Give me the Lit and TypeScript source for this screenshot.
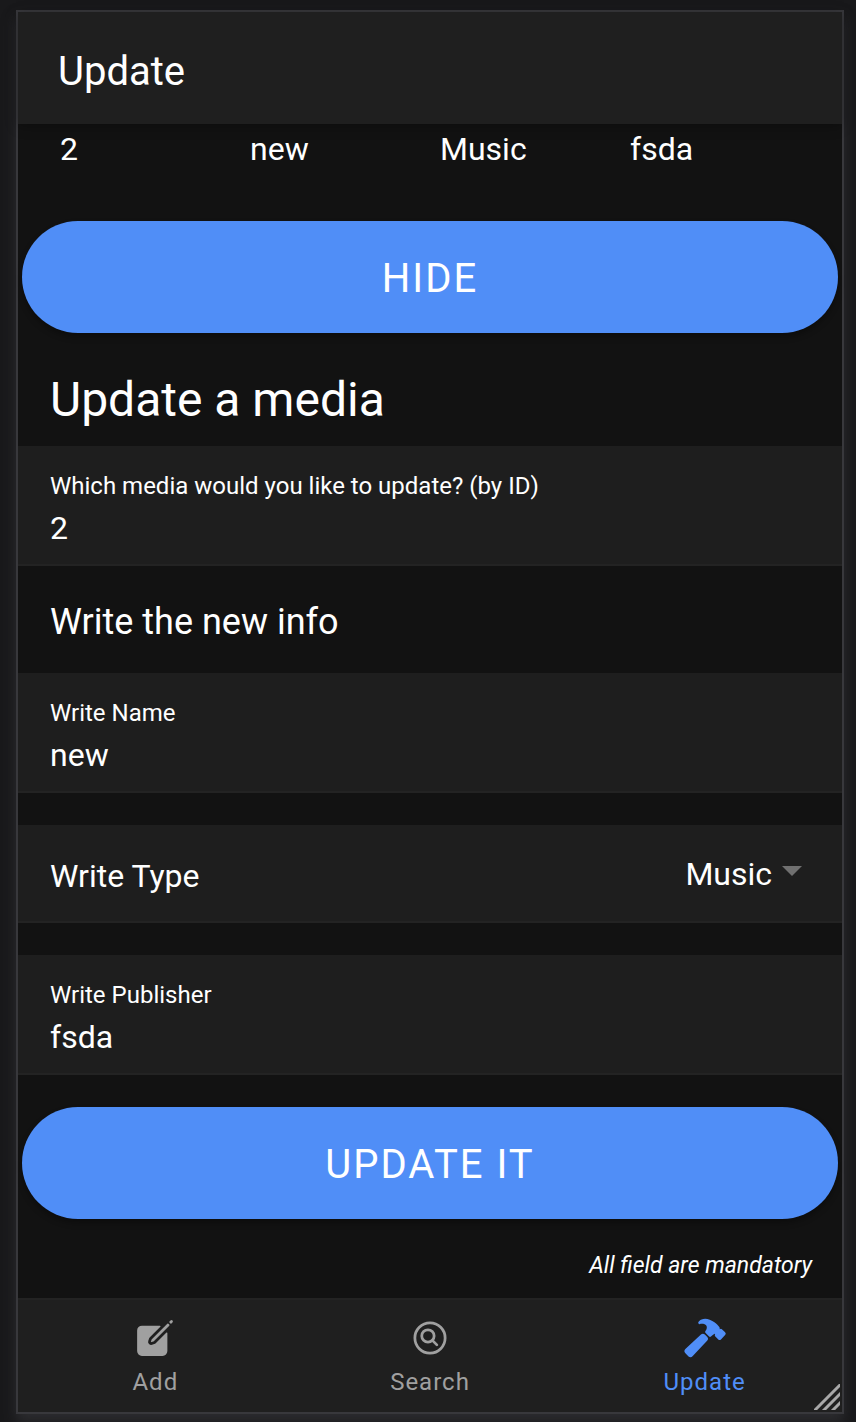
import { LitElement, html, css, svg } from "lit";
import { customElement, state } from "lit/decorators.js";

const icons = {
  add: svg`
    <path d="M459.94 53.25a16.06 16.06 0 00-23.22-.56L424.35 65a8 8 0 000 11.31l11.34 11.32a8 8 0 0011.34 0l12.06-12c6.1-6.09 6.67-16.01.85-22.38zM399.34 90L218.82 270.2a9 9 0 00-2.31 3.93L208.16 299a3.91 3.91 0 004.86 4.86l24.85-8.35a9 9 0 003.93-2.31L422 112.66a9 9 0 000-12.66l-9.95-10a9 9 0 00-12.71 0z"/>
    <path d="M386.34 193.66L264.45 315.79A41.08 41.08 0 01247.58 326l-25.9 8.67a35.92 35.92 0 01-44.33-44.33l8.67-25.9a41.08 41.08 0 0110.19-16.87L318.34 125.66A8 8 0 00312.69 112H104a56 56 0 00-56 56v240a56 56 0 0056 56h240a56 56 0 0056-56V199.31a8 8 0 00-13.66-5.65z"/>`,
  search: svg`
    <g fill="none" stroke="currentColor" stroke-width="32">
      <circle cx="256" cy="256" r="176"/>
      <circle cx="232" cy="232" r="72"/>
      <path stroke-linecap="round" d="M283.64 283.64L336 336"/>
    </g>`,
  update: svg`
    <path d="M280.16 242.79l-26.11-26.12a32 32 0 00-45.14-.12L27.38 384.08c-6.61 6.23-10.95 14.17-11.35 23.06a32.11 32.11 0 009.21 23.94l39 39.43a32.29 32.29 0 0022.76 9.49h1.18a32 32 0 0022.62-10.4l169.52-181.57a32 32 0 00-.16-45.24z"/>
    <path d="M490 190l-34.58-34.23a21.46 21.46 0 00-15.28-6.26 21.89 21.89 0 00-12.79 4.14c.5-7 1.24-17.54-5.11-26.44a258 258 0 00-24.88-28.82c-13.32-13.12-42.31-37.83-86.72-55.94A139.55 139.55 0 00257.56 32C226 32 202 46.24 192.81 54.68A119.92 119.92 0 00180 69.5a16 16 0 0018.34 24.5 63.75 63.75 0 018-2.75A75 75 0 01225 89c13.58 0 25.86 4.85 32.61 8.81 7.9 4.9 14.05 11.5 16.79 18.39a49.78 49.78 0 01.71 31.75 87.5 87.5 0 01-14.22 27.2c-5.19 7-4.55 16.5 2.4 23.46l40 40a16 16 0 0022.4 0c12-12 29-26 45.3-31.6a31 31 0 013 3.2 22 22 0 00-4 12.8 21.6 21.6 0 006.5 15.3l34.3 34.3a22 22 0 0031 0L490 222.3a22.8 22.8 0 000-32.3z"/>`,
};

const tabs = [
  { id: "add", label: "Add", icon: icons.add },
  { id: "search", label: "Search", icon: icons.search },
  { id: "update", label: "Update", icon: icons.update },
];

const record = ["2", "new", "Music", "fsda"];

@customElement("app-root")
export class AppRoot extends LitElement {
  static styles = css`
    :host {
      display: block;
      box-sizing: border-box;
      min-height: 100vh;
      padding: 10px 12px 8px 16px;
      background: #19191b;
      color: #fff;
      font-family: Roboto, "Liberation Sans", sans-serif;
      font-size: 32px;
      line-height: 40px;
    }
    * {
      box-sizing: border-box;
    }
    button,
    input,
    select {
      font: inherit;
      color: inherit;
      border: 0;
      margin: 0;
      padding: 0;
      background: none;
      outline: 0;
    }
    h1,
    h2,
    h3,
    p {
      margin: 0;
      font-weight: 400;
    }
    .device {
      position: relative;
      display: flex;
      flex-direction: column;
      min-height: calc(100vh - 18px);
      border: 2px solid #38383c;
      background: #121212;
      box-shadow: 0 8px 12px #2c2c2f;
    }
    .header {
      padding: 36px 40px 28px;
      background: #1f1f1f;
      box-shadow: 0 2px 12px rgba(0, 0, 0, 0.3);
    }
    .title {
      font-size: 40px;
      line-height: 48px;
    }
    .content {
      flex: 1;
    }
    .record {
      display: grid;
      grid-template-columns: repeat(4, 1fr);
      padding: 5px 32px 52px;
    }
    .cell {
      padding: 0 10px;
      line-height: 40px;
    }
    .action {
      display: block;
      width: calc(100% - 8px);
      height: 112px;
      margin: 0 4px;
      padding-top: 4px;
      border-radius: 56px;
      background: #508ef7;
      font-size: 40px;
      letter-spacing: 2px;
      text-transform: uppercase;
      box-shadow: 0 4px 6px rgba(0, 0, 0, 0.3);
    }
    .heading {
      padding: 37px 32px 16px;
      font-size: 48px;
      line-height: 60px;
    }
    .subheading {
      padding: 32px 32px 27px;
      font-size: 36px;
      line-height: 48px;
    }
    .item {
      display: flex;
      flex-direction: column;
      padding: 24px 32px 16px;
      background: #1e1e1e;
      border-bottom: 2px solid #232323;
    }
    .item + .item {
      margin-top: 32px;
    }
    .label {
      font-size: 24px;
      line-height: 32px;
    }
    .field {
      width: 100%;
      height: 46px;
      padding-top: 6px;
    }
    .choice {
      flex-direction: row;
      align-items: center;
      justify-content: space-between;
      padding: 29px 40px 27px 32px;
    }
    .choice-label {
      padding-top: 4px;
      line-height: 36px;
    }
    .picker {
      display: flex;
      align-items: center;
      gap: 10px;
    }
    .select {
      appearance: none;
      height: 40px;
      text-align: right;
      text-align-last: right;
    }
    .caret {
      width: 20px;
      height: 10px;
      margin-bottom: 6px;
      fill: #707070;
    }
    .submit {
      margin-top: 32px;
    }
    .note {
      padding: 32px 30px 17px;
      font-size: 23px;
      line-height: 30px;
      font-style: italic;
      text-align: right;
    }
    .tabs {
      display: grid;
      grid-template-columns: repeat(3, 1fr);
      background: #1f1f1f;
      border-top: 2px solid #232323;
    }
    .tab {
      display: flex;
      flex-direction: column;
      align-items: center;
      gap: 6px;
      height: 112px;
      padding-top: 16px;
      color: #a0a0a0;
      font-size: 24px;
      line-height: 32px;
      letter-spacing: 1px;
    }
    .tab.active {
      color: #508ef7;
    }
    .icon {
      width: 44px;
      height: 44px;
      fill: currentColor;
    }
    .grip {
      position: absolute;
      right: 2px;
      bottom: 2px;
      width: 26px;
      height: 26px;
      stroke: #a8a8a8;
      stroke-width: 3;
    }
  `;

  @state() private active = "update";
  @state() private shown = true;

  render() {
    return html`
      <div class="device">
        <header class="header"><h1 class="title">Update</h1></header>
        <main class="content">
          ${this.shown
            ? html`<div class="record">
                ${record.map((v) => html`<div class="cell">${v}</div>`)}
              </div>`
            : null}
          <button class="action" @click=${() => (this.shown = !this.shown)}>
            ${this.shown ? "Hide" : "Show"}
          </button>
          <h2 class="heading">Update a media</h2>
          <div class="item">
            <label class="label" for="media-id">Which media would you like to update? (by ID)</label>
            <input class="field" id="media-id" .value=${"2"} />
          </div>
          <h3 class="subheading">Write the new info</h3>
          <div class="item">
            <label class="label" for="name">Write Name</label>
            <input class="field" id="name" .value=${"new"} />
          </div>
          <div class="item choice">
            <label class="choice-label" for="type">Write Type</label>
            <div class="picker">
              <select class="select" id="type">
                <option>Music</option>
              </select>
              <svg class="caret" viewBox="0 0 20 10" aria-hidden="true"><path d="M0 0h20L10 10z" /></svg>
            </div>
          </div>
          <div class="item">
            <label class="label" for="publisher">Write Publisher</label>
            <input class="field" id="publisher" .value=${"fsda"} />
          </div>
          <button class="action submit">Update it</button>
          <p class="note">All field are mandatory</p>
        </main>
        <nav class="tabs">
          ${tabs.map(
            (t) => html`<button
              class="tab ${t.id === this.active ? "active" : ""}"
              @click=${() => (this.active = t.id)}
            >
              <svg class="icon" viewBox="0 0 512 512" aria-hidden="true">${t.icon}</svg>
              <span>${t.label}</span>
            </button>`
          )}
        </nav>
        <svg class="grip" viewBox="0 0 26 26" aria-hidden="true">
          <path d="M0 27L27 0M9 27L27 9M18 27L27 18" />
        </svg>
      </div>
    `;
  }
}
